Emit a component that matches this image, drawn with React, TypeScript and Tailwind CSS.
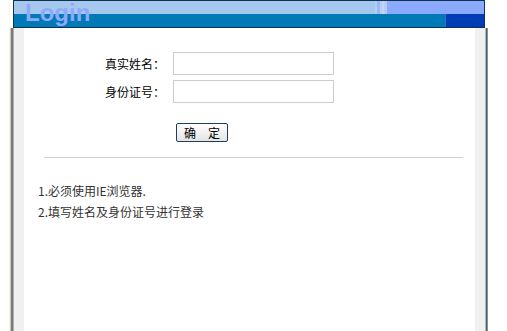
import React from "react";

export default function App() {
  const font = { fontFamily: '"Noto Sans CJK SC", "Liberation Sans", sans-serif' };
  return (
    <div className="w-[507px] h-[331px] bg-white flex overflow-hidden" style={font}>
      <div className="w-[10px] shrink-0 flex justify-end">
        <div className="w-px h-full bg-[#fbf6dc]" />
      </div>
      <div className="w-[478px] shrink-0 flex flex-col">
        {/* header */}
        <div className="h-[28px] shrink-0 flex">
          <div className="w-[3px]" />
          <div className="relative w-[472px] h-[28px] border-l border-t border-b border-r border-[#0d3352] flex flex-col">
            <div className="h-[13px] flex">
              <div className="w-[361px] bg-[#a6c8ef]" />
              <div className="w-[12px] bg-[#b5cdf3] flex">
                <div className="w-[3px] bg-[#9ab8f5] ml-[2px]" />
                <div className="w-[2px] bg-[#c2d6f2] ml-[2px]" />
              </div>
              <div className="flex-1 bg-[#8caafb]" />
            </div>
            <div className="flex-1 flex">
              <div className="w-[431px] bg-[#0079b7]" />
              <div className="w-px bg-[#2a6fd0]" />
              <div className="flex-1 bg-[#003cb5]" />
            </div>
            <div
              className="absolute left-[11px] top-[-1px] text-[24px] font-bold leading-[26px] text-[#8ea9fa]"
              style={{ fontFamily: '"Liberation Sans", Arial, sans-serif' }}
            >
              Login
            </div>
          </div>
        </div>
        {/* body */}
        <div className="flex-1 flex">
          <div className="w-[4px] flex">
            <div className="w-px bg-[#c8c8c8]" />
            <div className="w-[2px] bg-[#7a7a7a]" />
            <div className="w-px bg-[#b0b0b0]" />
          </div>
          <div className="w-[10px] bg-[#f0f0f0]" />
          <div className="w-[451px] bg-white flex flex-col">
            <div className="pt-[24px] flex flex-col gap-[5px]">
              <div className="flex items-center h-[23px]">
                <div className="w-[141px] text-right text-[12px] text-black">真实姓名：</div>
                <input className="ml-[8px] w-[161px] h-[23px] border border-[#cccccc] outline-none" />
              </div>
              <div className="flex items-center h-[23px]">
                <div className="w-[141px] text-right text-[12px] text-black">身份证号：</div>
                <input className="ml-[8px] w-[161px] h-[23px] border border-[#cccccc] outline-none" />
              </div>
            </div>
            <div className="mt-[20px] ml-[152px] flex">
              <button className="w-[52px] h-[19px] rounded-[2px] border border-[#1d3f5e] bg-gradient-to-b from-[#ffffff] to-[#e4e4e4] text-[12px] leading-[17px] text-black">
                确　定
              </button>
            </div>
            <div className="mt-[15px] ml-[20px] w-[419px] h-px bg-[#d0d0d0]" />
            <div className="mt-[22px] ml-[14px] text-[12px] leading-[21px] text-[#333333]">
              <div>1.必须使用IE浏览器.</div>
              <div>2.填写姓名及身份证号进行登录</div>
            </div>
          </div>
          <div className="w-[10px] bg-[#f0f0f0]" />
          <div className="w-[3px] flex">
            <div className="w-px bg-[#9cc0e0]" />
            <div className="w-px bg-[#5a5a5a]" />
            <div className="w-px bg-[#909090]" />
          </div>
        </div>
      </div>
    </div>
  );
}
